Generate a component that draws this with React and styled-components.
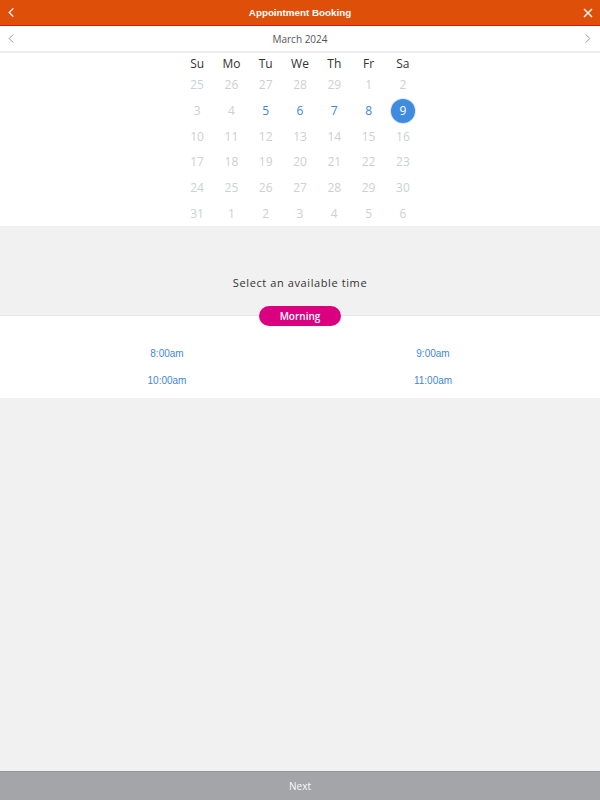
import React from 'react';
import styled, { createGlobalStyle } from 'styled-components';

const GlobalStyle = createGlobalStyle`
  html, body {
    margin: 0;
    padding: 0;
    height: 100%;
    background: #f1f1f1;
  }
  #root {
    height: 100%;
  }
`;

const Page = styled.div`
  display: flex;
  flex-direction: column;
  height: 800px;
  background: #f1f1f1;
  font-family: 'Open Sans', 'Liberation Sans', sans-serif;
`;

const TopBar = styled.div`
  height: 25px;
  background: #de4f09;
  border-bottom: 1px solid #e0100f;
  display: grid;
  grid-template-columns: 30px 1fr 30px;
  align-items: center;
  color: #ffffff;
`;

const TopTitle = styled.div`
  text-align: center;
  font-family: 'Liberation Sans', Arial, sans-serif;
  font-size: 9.8px;
  font-weight: bold;
`;

const IconButton = styled.div`
  display: flex;
  align-items: center;
  justify-content: ${(p) => (p.$end ? 'flex-end' : 'flex-start')};
  padding: 0 ${(p) => (p.$end ? '7px' : '0')} 0 ${(p) => (p.$end ? '0' : '6px')};
  height: 100%;
`;

const MonthBar = styled.div`
  height: 25px;
  background: #ffffff;
  border-bottom: 2px solid #ececec;
  display: grid;
  grid-template-columns: 30px 1fr 30px;
  align-items: center;
`;

const MonthTitle = styled.div`
  text-align: center;
  font-size: 10px;
  color: #555555;
`;

const Calendar = styled.div`
  background: #ffffff;
  display: flex;
  justify-content: center;
  padding: 1px 0 0;
`;

const Grid = styled.div`
  display: grid;
  grid-template-columns: repeat(7, 34.3px);
  grid-template-rows: 18px;
  grid-auto-rows: 25.7px;
`;

const DayHead = styled.div`
  display: flex;
  align-items: center;
  justify-content: center;
  font-size: 12px;
  color: #333333;
`;

const Day = styled.div`
  display: flex;
  align-items: center;
  justify-content: center;
  font-size: 12px;
  color: ${(p) => (p.$active ? '#3d86d8' : '#cdd0d3')};
`;

const Selected = styled.span`
  width: 24px;
  height: 24px;
  border-radius: 50%;
  background: #3f8be0;
  color: #ffffff;
  display: flex;
  align-items: center;
  justify-content: center;
  box-shadow: 0 0 0 1px #d8e6f6;
`;

const TimeHeader = styled.div`
  height: 89px;
  display: flex;
  flex-direction: column;
  align-items: center;
  justify-content: flex-end;
  position: relative;
`;

const TimeLabel = styled.div`
  font-size: 11px;
  letter-spacing: 0.6px;
  color: #333333;
  margin-bottom: 25px;
`;

const Pill = styled.div`
  position: absolute;
  left: 50%;
  bottom: -11px;
  transform: translateX(-50%);
  width: 82px;
  height: 20px;
  border-radius: 10px;
  background: #da0080;
  color: #ffffff;
  font-size: 10px;
  font-weight: 600;
  display: flex;
  align-items: center;
  justify-content: center;
  z-index: 1;
`;

const Slots = styled.div`
  background: #ffffff;
  border-top: 1px solid #e6e6e6;
  display: grid;
  grid-template-columns: 1fr 1fr;
  grid-auto-rows: 27px;
  padding: 24px 0 4px;
`;

const Slot = styled.div`
  font-family: 'Liberation Sans', Arial, sans-serif;
  font-size: 10px;
  color: #3f86dc;
  display: flex;
  justify-content: ${(p) => (p.$right ? 'flex-end' : 'flex-start')};
  align-items: center;
`;

const SlotText = styled.span`
  width: 64px;
  text-align: center;
  margin: 0 ${(p) => (p.$right ? '135px' : '0')} 0 ${(p) => (p.$right ? '0' : '135px')};
`;

const Spacer = styled.div`
  flex: 1;
`;

const NextBar = styled.div`
  height: 28px;
  background: #a4a5a8;
  border-top: 1px solid #96979a;
  color: #fafafa;
  font-size: 10px;
  display: flex;
  align-items: center;
  justify-content: center;
`;

const Chevron = ({ dir, color, size = 12, width = 1.3 }) => (
  <svg width={size} height={size} viewBox="0 0 12 12" fill="none">
    <path
      d={dir === 'left' ? 'M8 1.5 L3.5 6 L8 10.5' : 'M4 1.5 L8.5 6 L4 10.5'}
      stroke={color}
      strokeWidth={width}
    />
  </svg>
);

const CloseIcon = () => (
  <svg width="10" height="10" viewBox="0 0 10 10" fill="none">
    <path d="M1 1 L9 9 M9 1 L1 9" stroke="#ffffff" strokeWidth="1.4" />
  </svg>
);

const heads = ['Su', 'Mo', 'Tu', 'We', 'Th', 'Fr', 'Sa'];
const days = [
  25, 26, 27, 28, 29, 1, 2,
  3, 4, 5, 6, 7, 8, 9,
  10, 11, 12, 13, 14, 15, 16,
  17, 18, 19, 20, 21, 22, 23,
  24, 25, 26, 27, 28, 29, 30,
  31, 1, 2, 3, 4, 5, 6,
];
const slots = ['8:00am', '9:00am', '10:00am', '11:00am'];

export default function App() {
  return (
    <Page>
      <GlobalStyle />
      <TopBar>
        <IconButton>
          <Chevron dir="left" color="#ffffff" size={11} width={1.5} />
        </IconButton>
        <TopTitle>Appointment Booking</TopTitle>
        <IconButton $end>
          <CloseIcon />
        </IconButton>
      </TopBar>
      <MonthBar>
        <IconButton>
          <Chevron dir="left" color="#8a8f95" size={11} width={1} />
        </IconButton>
        <MonthTitle>March 2024</MonthTitle>
        <IconButton $end>
          <Chevron dir="right" color="#8a8f95" size={11} width={1} />
        </IconButton>
      </MonthBar>
      <Calendar>
        <Grid>
          {heads.map((h) => (
            <DayHead key={h}>{h}</DayHead>
          ))}
          {days.map((d, i) => {
            if (i === 13) {
              return (
                <Day key={i}>
                  <Selected>{d}</Selected>
                </Day>
              );
            }
            return (
              <Day key={i} $active={i >= 9 && i <= 12}>
                {d}
              </Day>
            );
          })}
        </Grid>
      </Calendar>
      <TimeHeader>
        <TimeLabel>Select an available time</TimeLabel>
        <Pill>Morning</Pill>
      </TimeHeader>
      <Slots>
        {slots.map((s, i) => (
          <Slot key={s} $right={i % 2 === 1}>
            <SlotText $right={i % 2 === 1}>{s}</SlotText>
          </Slot>
        ))}
      </Slots>
      <Spacer />
      <NextBar>Next</NextBar>
    </Page>
  );
}
